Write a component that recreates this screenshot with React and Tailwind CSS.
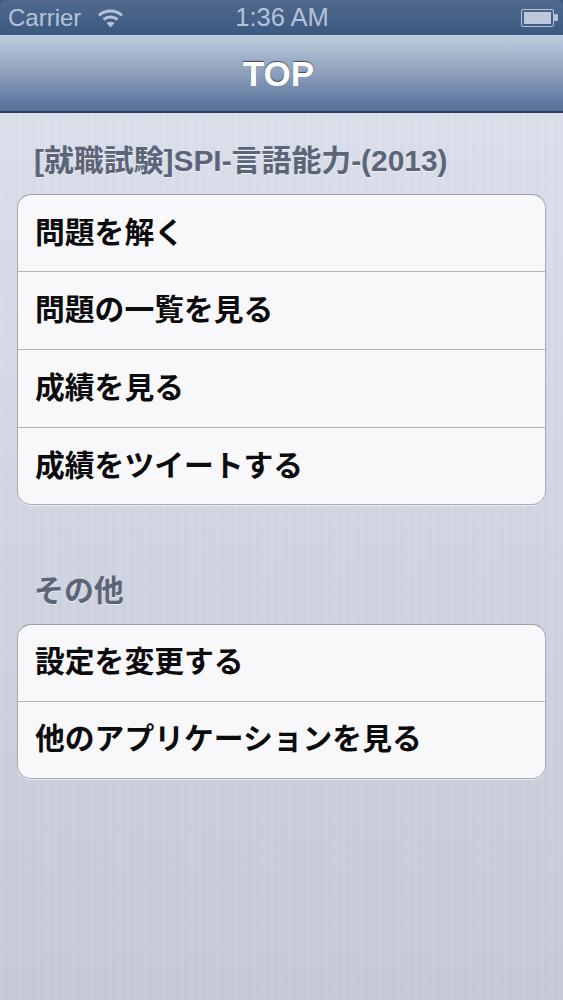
import React from "react";

const FONT = "font-['Liberation_Sans','Noto_Sans_CJK_JP',sans-serif]";

const Row = ({ label, first, last }) => (
  <div
    className={`flex items-center pl-[17px] text-[29.8px] font-bold text-[#0c0c0e] ${
      last ? "h-[76px]" : first ? "h-[77px] border-b border-[#b4b5b9]" : "h-[78px] border-b border-[#b4b5b9]"
    }`}
  >
    <span className="whitespace-nowrap">{label}</span>
  </div>
);

const Card = ({ items }) => (
  <div className="mx-[17px] rounded-[14px] border border-[#a9abb0] border-t-[#9c9ea3] bg-[#f8f8fa] shadow-[0_1px_0_rgba(255,255,255,0.55)]">
    {items.map((item, i) => (
      <Row key={item} label={item} first={i === 0} last={i === items.length - 1} />
    ))}
  </div>
);

const SectionTitle = ({ children }) => (
  <h2 className="pl-[34px] text-[29.9px] font-bold leading-none whitespace-nowrap text-[#5c6577] [text-shadow:0_1px_0_rgba(255,255,255,0.6)]">
    {children}
  </h2>
);

const StatusBar = () => (
  <div className="flex h-[35px] items-center justify-between rounded-t-[6px] bg-gradient-to-b from-[#516a8e] to-[#3b5880] pl-[8px] pr-[5px] leading-none text-[#b4c3d9]">
    <div className="flex w-[178px] items-center text-[24px]">
      <span>Carrier</span>
      <svg width="27" height="20" viewBox="0 0 26 20" className="ml-[16px]" fill="none" stroke="#b4c3d9" strokeWidth="3">
        <path d="M1.5 7.5C7.5 1.5 18.5 1.5 24.5 7.5" />
        <path d="M6 11.5C10 8 16 8 20 11.5" />
        <path d="M13 19.5l-4-4.5c2.3-1.6 5.7-1.6 8 0z" fill="#b4c3d9" stroke="none" />
      </svg>
    </div>
    <span className="text-[25.5px]">1:36 AM</span>
    <div className="flex w-[180px] items-center justify-end">
      <div className="flex h-[18px] w-[33px] items-center rounded-[2px] border border-[#b4c3d9] p-[2px]">
        <div className="h-full w-full bg-[#bcc8da]" />
      </div>
      <div className="h-[7px] w-[4px] rounded-r-[1px] bg-[#b4c3d9]" />
    </div>
  </div>
);

export default function App() {
  return (
    <div className={`${FONT} relative h-[1000px] w-[563px] overflow-hidden bg-[#3b5880]`}>
      <StatusBar />

      <header className="flex h-[78px] items-center justify-center border-t border-[#c8d5e6] border-b-2 border-b-[#2f3f5c] bg-gradient-to-b from-[#bccbde] via-[#8d9fbb] to-[#546f99] pr-[6px]">
        <h1 className="text-[35px] font-bold leading-none text-white [text-shadow:0_-1px_1px_rgba(40,55,85,0.85)]">
          TOP
        </h1>
      </header>

      <main className="h-[887px] bg-[repeating-linear-gradient(to_right,rgba(255,255,255,0.025)_0px,rgba(255,255,255,0.025)_4px,rgba(0,0,0,0.006)_4px,rgba(0,0,0,0.006)_9px),linear-gradient(to_bottom,#dadfeb,#c5cad6)] pt-[33px]">
        <SectionTitle>[就職試験]SPI-言語能力-(2013)</SectionTitle>
        <div className="mt-[18px]">
          <Card items={["問題を解く", "問題の一覧を見る", "成績を見る", "成績をツイートする"]} />
        </div>

        <div className="mt-[71px]">
          <SectionTitle>その他</SectionTitle>
        </div>
        <div className="mt-[18px]">
          <Card items={["設定を変更する", "他のアプリケーションを見る"]} />
        </div>
      </main>
    </div>
  );
}
